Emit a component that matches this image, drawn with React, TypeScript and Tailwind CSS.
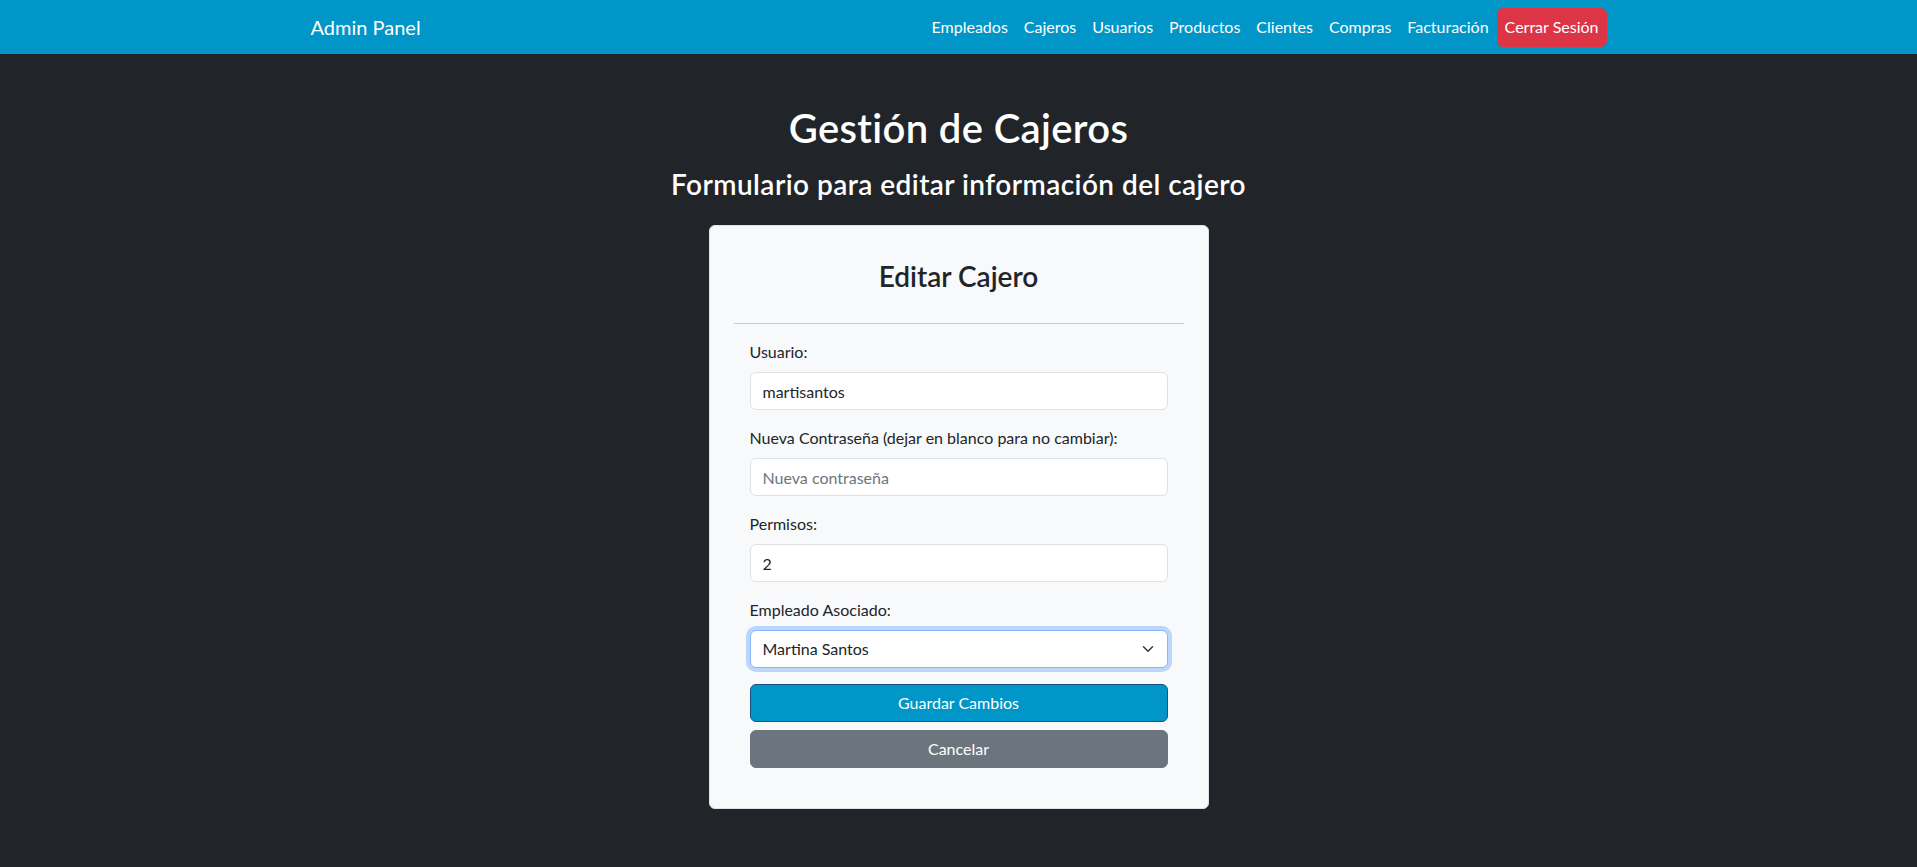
import React, { useState } from "react";

const navItems = ["Empleados", "Cajeros", "Usuarios", "Productos", "Clientes", "Compras", "Facturación"];

const Navbar: React.FC = () => {
  return (
    <nav className="h-[54px] bg-[#0096c7]">
      <div className="mx-auto flex h-full max-w-[1320px] items-center justify-between px-3">
        <a href="#" className="text-[20px] leading-[30px] text-white">Admin Panel</a>
        <ul className="flex items-center">
          {navItems.map((item) => (
            <li key={item}>
              <a href="#" className="block px-2 py-2 text-base leading-6 text-white">{item}</a>
            </li>
          ))}
          <li>
            <a href="#" className="flex h-[39px] items-center rounded-md bg-[#dc3545] px-2 text-base text-white">Cerrar Sesión</a>
          </li>
        </ul>
      </div>
    </nav>
  )
}

const Field: React.FC<{ label: string; children: React.ReactNode }> = ({ label, children }) => (
  <div className="mb-4">
    <label className="mb-2 block text-base leading-6 text-[#212529]">{label}</label>
    {children}
  </div>
)

const inputCls = "block h-[38px] w-full rounded-md border border-[#dee2e6] bg-white px-3 text-base text-[#212529] outline-none placeholder:text-[#6c757d]"

const App: React.FC = () => {
  const [usuario, setUsuario] = useState("martisantos");
  const [password, setPassword] = useState("");
  const [permisos, setPermisos] = useState("2");
  const [empleado, setEmpleado] = useState("Martina Santos");

  return (
    <div className="min-h-screen bg-[#212529] font-['Lato','Noto_Sans',sans-serif]">
      <Navbar />
      <main className="flex flex-col items-center pt-[50px] pb-10">
        <h1 className="text-[40px] font-semibold leading-[48px] tracking-[0.35px] text-white">Gestión de Cajeros</h1>
        <h3 className="mt-[15px] text-[28px] font-semibold leading-[34px] tracking-[0.45px] text-white">Formulario para editar información del cajero</h3>

        <div className="mt-6 w-[500px] rounded-md border border-[#dee2e6] bg-[#f8f9fa] px-6 pt-[33px] pb-6">
          <h2 className="text-center text-[28px] font-semibold leading-[34px] text-[#212529]">Editar Cajero</h2>
          <hr className="mt-[30px] mb-4 border-t border-[#c8c9ca]" />

          <form className="px-4 pb-4" onSubmit={(e) => e.preventDefault()}>
            <Field label="Usuario:">
              <input className={inputCls} value={usuario} onChange={(e) => setUsuario(e.target.value)} />
            </Field>
            <Field label="Nueva Contraseña (dejar en blanco para no cambiar):">
              <input type="password" className={inputCls} placeholder="Nueva contraseña" value={password} onChange={(e) => setPassword(e.target.value)} />
            </Field>
            <Field label="Permisos:">
              <input className={inputCls} value={permisos} onChange={(e) => setPermisos(e.target.value)} />
            </Field>
            <Field label="Empleado Asociado:">
              <div className="relative">
                <select
                  className="block h-[38px] w-full appearance-none rounded-md border border-[#86b7fe] bg-white px-3 text-base text-[#212529] shadow-[0_0_0_4px_rgba(13,110,253,0.25)] outline-none"
                  value={empleado}
                  onChange={(e) => setEmpleado(e.target.value)}
                >
                  <option>Martina Santos</option>
                  <option>Carlos Pérez</option>
                  <option>Lucía Gómez</option>
                </select>
                <svg className="pointer-events-none absolute right-[12px] top-[13px]" width="16" height="12" viewBox="0 0 16 16" fill="none">
                  <path d="m2 5 6 6 6-6" stroke="#343a40" strokeWidth="2" strokeLinecap="round" strokeLinejoin="round" />
                </svg>
              </div>
            </Field>

            <button type="submit" className="block h-[38px] w-full rounded-md border border-[#1d4f8c] bg-[#0096c7] text-base text-white">Guardar Cambios</button>
            <button type="button" className="mt-2 block h-[38px] w-full rounded-md border border-[#6c757d] bg-[#6c757d] text-base text-white">Cancelar</button>
          </form>
        </div>
      </main>
    </div>
  )
}

export default App
